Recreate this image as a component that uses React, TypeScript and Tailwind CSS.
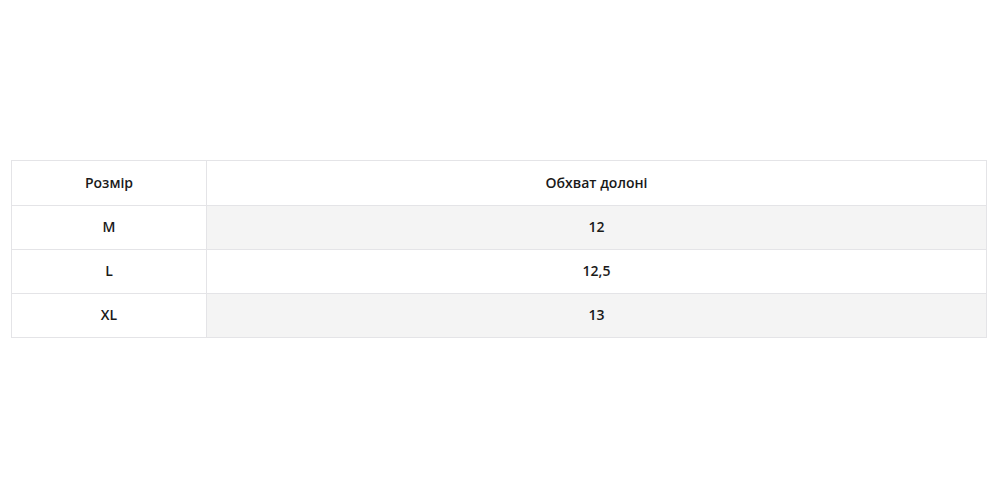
import React from "react";

const rows = [
  { size: "M", value: "12" },
  { size: "L", value: "12,5" },
  { size: "XL", value: "13" },
];

const App = () => {
  return (
    <div className="w-[1000px] h-[500px] bg-white pt-[160px] pl-[11px] font-['Open_Sans',sans-serif]">
      <table className="w-[976px] border-collapse text-[14px] font-semibold text-[#1a1a1a]">
        <thead>
          <tr className="h-[45px]">
            <th className="w-[195px] border border-[#e4e4e7] font-semibold pb-[2px]">Розмір</th>
            <th className="border border-[#e4e4e7] font-semibold pb-[2px]">Обхват долоні</th>
          </tr>
        </thead>
        <tbody>
          {rows.map((r, i) => (
            <tr key={r.size} className="h-[44px]">
              <td className="border border-[#e4e4e7] text-center bg-white pb-[3px]">{r.size}</td>
              <td
                className={
                  i % 2 === 0
                    ? "border border-[#e4e4e7] text-center bg-[#f4f4f4] pb-[3px]"
                    : "border border-[#e4e4e7] text-center bg-white pb-[3px]"
                }
              >
                {r.value}
              </td>
            </tr>
          ))}
        </tbody>
      </table>
    </div>
  );
};

export default App;
